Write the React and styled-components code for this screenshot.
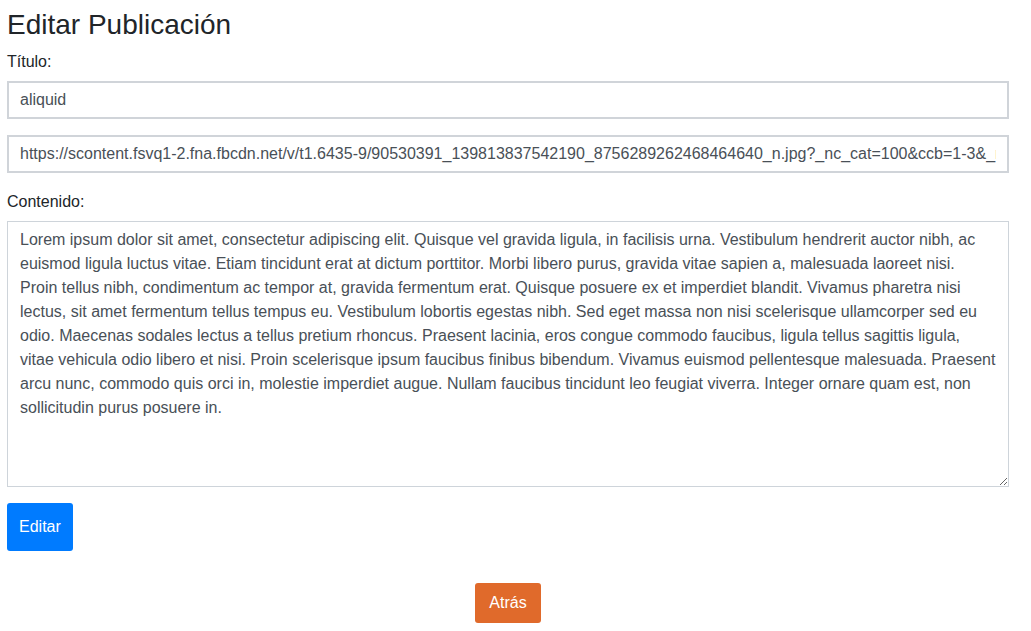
import React from "react";
import styled, { createGlobalStyle } from "styled-components";

const GlobalStyle = createGlobalStyle`
  html, body { margin: 0; padding: 0; background: #fff; }
  body {
    font-family: "Liberation Sans", Arial, sans-serif;
    font-size: 16px;
    line-height: 1.5;
    color: #212529;
  }
  * { box-sizing: border-box; }
`;

const Page = styled.div`
  padding: 8px 22px 8px 7px;
`;

const Title = styled.h1`
  margin: 0 0 7px 0;
  font-size: 28px;
  font-weight: 400;
  line-height: 1.2;
  color: #212529;
`;

const Form = styled.form`
  display: flex;
  flex-direction: column;
`;

const Group = styled.div`
  display: flex;
  flex-direction: column;
  margin-bottom: 16px;
`;

const Label = styled.label`
  margin-bottom: 7px;
  padding-top: 1px;
  font-size: 16px;
  line-height: 24px;
`;

const Input = styled.input`
  display: block;
  width: 100%;
  height: 38px;
  padding: 5px 11px;
  border: 2px solid #d0d4d9;
  border-radius: 0;
  font-family: inherit;
  font-size: 16px;
  line-height: 24px;
  color: #495057;
  background: #fff;
  outline: none;
`;

const TextArea = styled.textarea`
  display: block;
  width: 100%;
  height: 266px;
  padding: 6px 12px;
  border: 1px solid #ced4da;
  border-radius: 0;
  font-family: inherit;
  font-size: 16px;
  line-height: 24px;
  color: #495057;
  background: #fff;
  outline: none;
  resize: vertical;
`;

const Button = styled.button`
  display: inline-block;
  border: none;
  border-radius: 3px;
  font-family: inherit;
  font-size: 16px;
  line-height: 24px;
  color: #fff;
  background: ${(p) => p.$bg};
  padding: ${(p) => p.$pad};
  cursor: pointer;
`;

const SubmitRow = styled.div`
  display: flex;
`;

const BackRow = styled.div`
  display: flex;
  justify-content: center;
  margin-top: 32px;
`;

const content =
  "Lorem ipsum dolor sit amet, consectetur adipiscing elit. Quisque vel gravida ligula, in facilisis urna. Vestibulum hendrerit auctor nibh, ac euismod ligula luctus vitae. Etiam tincidunt erat at dictum porttitor. Morbi libero purus, gravida vitae sapien a, malesuada laoreet nisi. Proin tellus nibh, condimentum ac tempor at, gravida fermentum erat. Quisque posuere ex et imperdiet blandit. Vivamus pharetra nisi lectus, sit amet fermentum tellus tempus eu. Vestibulum lobortis egestas nibh. Sed eget massa non nisi scelerisque ullamcorper sed eu odio. Maecenas sodales lectus a tellus pretium rhoncus. Praesent lacinia, eros congue commodo faucibus, ligula tellus sagittis ligula, vitae vehicula odio libero et nisi. Proin scelerisque ipsum faucibus finibus bibendum. Vivamus euismod pellentesque malesuada. Praesent arcu nunc, commodo quis orci in, molestie imperdiet augue. Nullam faucibus tincidunt leo feugiat viverra. Integer ornare quam est, non sollicitudin purus posuere in.";

export default function App() {
  return (
    <>
      <GlobalStyle />
      <Page>
        <Title>Editar Publicación</Title>
        <Form onSubmit={(e) => e.preventDefault()}>
          <Group>
            <Label htmlFor="titulo">Título:</Label>
            <Input id="titulo" defaultValue="aliquid" />
          </Group>
          <Group>
            <Input defaultValue="https://scontent.fsvq1-2.fna.fbcdn.net/v/t1.6435-9/90530391_139813837542190_8756289262468464640_n.jpg?_nc_cat=100&ccb=1-3&_nc_sid=8bfeb9&_nc_ohc=abc" />
          </Group>
          <Group>
            <Label htmlFor="contenido">Contenido:</Label>
            <TextArea id="contenido" defaultValue={content} />
          </Group>
          <SubmitRow>
            <Button type="submit" $bg="#007bff" $pad="12px 12px">
              Editar
            </Button>
          </SubmitRow>
        </Form>
        <BackRow>
          <Button type="button" $bg="#e06a2b" $pad="8px 14px">
            Atrás
          </Button>
        </BackRow>
      </Page>
    </>
  );
}
